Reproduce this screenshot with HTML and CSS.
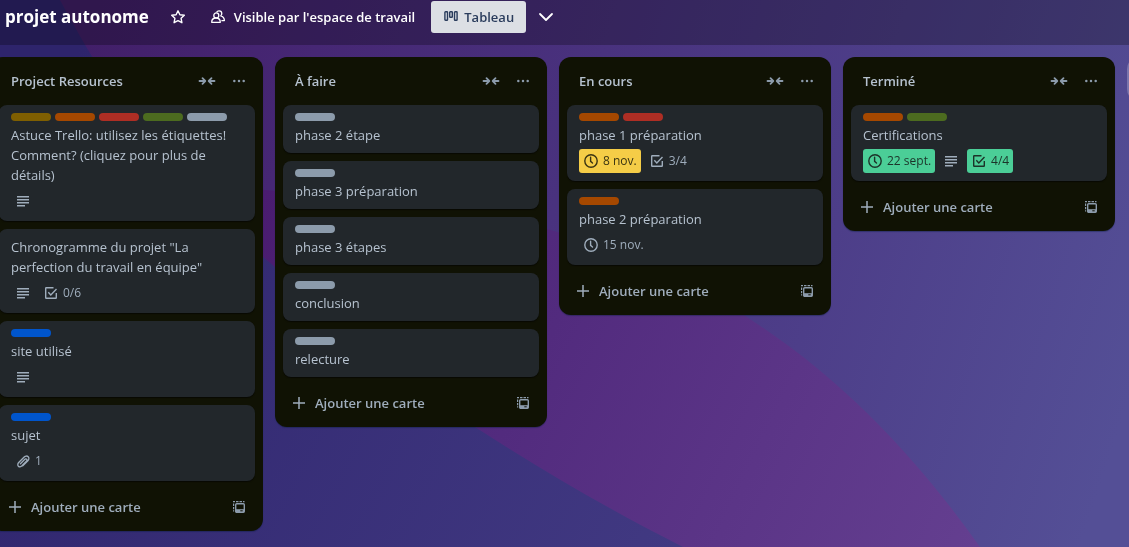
FILE: index.html
```
<!DOCTYPE html>
<html lang="fr">
<head>
<meta charset="utf-8">
<meta name="viewport" content="width=device-width, initial-scale=1">
<title>projet autonome</title>
<link rel="stylesheet" href="styles.css">
</head>
<body>
<svg class="sprite" aria-hidden="true">
  <symbol id="collapse" viewBox="0 0 18 10"><path d="M1.500 5h5.500M4.500 2.200l2.800 2.800-2.800 2.800M16.500 5h-5.500M13.500 2.200l-2.800 2.800 2.800 2.800" fill="none" stroke="currentColor" stroke-width="1.800" stroke-linecap="round" stroke-linejoin="round"/></symbol>
  <symbol id="more" viewBox="0 0 16 16"><g fill="currentColor"><circle cx="3.300" cy="8" r="1.250"/><circle cx="8" cy="8" r="1.250"/><circle cx="12.700" cy="8" r="1.250"/></g></symbol>
  <symbol id="desc" viewBox="0 0 16 16"><path d="M2 3h12v1.500H2zM2 6h12v1.500H2zM2 9h12v1.500H2zM2 12h8v1.500H2z" fill="currentColor"/></symbol>
  <symbol id="check" viewBox="0 0 16 16"><path d="M10.500 2.700H3.200a.5.500 0 0 0-.5.500v9.600c0 .3.200.5.500.5h9.600c.3 0 .5-.2.500-.5V8M5.300 7.300l2.500 2.600L13.500 4" fill="none" stroke="currentColor" stroke-width="1.400"/></symbol>
  <symbol id="clock" viewBox="0 0 16 16"><circle cx="8" cy="8" r="6.200" fill="none" stroke="currentColor" stroke-width="1.400"/><path d="M7.600 4.200v4.200l1.900 1.600" fill="none" stroke="currentColor" stroke-width="1.400" stroke-linecap="round"/></symbol>
  <symbol id="clip" viewBox="0 0 16 16"><path d="M7.800 12.800l5.100-5.100c1.200-1.200 1.300-3 .3-4s-2.800-.9-4 .3L3.700 9.500c-1.100 1.100-1.200 2.800-.3 3.700s2.300.7 3.300-.2l4.700-4.700c.7-.7.800-1.600.3-2.100s-1.400-.4-2.100.3L5.400 10.700" fill="none" stroke="currentColor" stroke-width="1.300" stroke-linecap="round"/></symbol>
  <symbol id="plus" viewBox="0 0 16 16"><path d="M8 2v12M2 8h12" stroke="currentColor" stroke-width="1.500"/></symbol>
  <symbol id="template" viewBox="0 0 16 16"><rect x="4.700" y="4.700" width="8.600" height="8.600" rx="1" fill="none" stroke="currentColor" stroke-width="1.400"/><path d="M4.700 10.200h8.600v3H4.700z" fill="currentColor"/><path d="M9.300 11.300h2.400v1H9.300z" fill="#101204"/><path d="M2 2h2v1.300H2zM5 2h2.500v1.300H5zM8.500 2H11v1.300H8.500zM12 2h1.500v1.300H12zM2 4.500h1.200V7H2zM2 8h1.200v2.300H2zM2 11.200h1.200v1.300H2z" fill="currentColor"/></symbol>
</svg>
<svg class="backdrop" viewBox="0 0 1129 547" preserveAspectRatio="none" aria-hidden="true">
  <defs>
    <linearGradient id="violet" gradientUnits="userSpaceOnUse" x1="80" y1="60" x2="1129" y2="400">
      <stop offset="0" stop-color="#421f69"/><stop offset=".2" stop-color="#462774"/><stop offset=".45" stop-color="#49327e"/><stop offset=".7" stop-color="#4d3e89"/><stop offset="1" stop-color="#544f96"/>
    </linearGradient>
    <linearGradient id="magenta" gradientUnits="userSpaceOnUse" x1="260" y1="200" x2="980" y2="547">
      <stop offset="0" stop-color="#4a1c70"/><stop offset=".4" stop-color="#522b7e"/><stop offset="1" stop-color="#643f90"/>
    </linearGradient>
    <linearGradient id="blue" gradientUnits="userSpaceOnUse" x1="0" y1="200" x2="680" y2="547">
      <stop offset="0" stop-color="#2e246c"/><stop offset="1" stop-color="#413982"/>
    </linearGradient>
  </defs>
  <rect width="1129" height="547" fill="url(#violet)"/>
  <path d="M0 170C180 185 420 195 547 229C760 287 890 420 980 547H0z" fill="url(#magenta)"/>
  <path d="M0 0H60C90 55 150 165 263 257C350 330 440 405 475 427C545 472 610 510 683 547H0z" fill="url(#blue)"/>
</svg>
<header class="topbar">
  <h1 class="board-name">projet autonome</h1>
  <button class="bar-btn square" aria-label="Ajouter aux favoris"><svg class="icon" viewBox="0 0 16 16"><path d="M8 1.800l1.900 4 4.400.5-3.200 3 .8 4.400L8 11.600l-3.900 2.100.8-4.400-3.200-3 4.400-.5z" fill="none" stroke="currentColor" stroke-width="1.400" stroke-linejoin="round"/></svg></button>
  <button class="bar-btn visibility"><svg class="icon" viewBox="0 0 16 16"><path d="M1.700 13.300c0-2.600 1.700-4.300 4.300-4.300s4.300 1.700 4.300 4.300z" fill="none" stroke="currentColor" stroke-width="1.300" stroke-linejoin="round"/><circle cx="6.300" cy="6.400" r="2.500" fill="none" stroke="currentColor" stroke-width="1.300"/><path d="M6.600 3.300c.5-1 1.300-1.500 2.400-1.500 1.600 0 2.800 1.200 2.800 2.800 0 1-.4 1.700-1.100 2.300 2.300.7 3.700 2.400 3.700 4.700h-3" fill="none" stroke="currentColor" stroke-width="1.300" stroke-linejoin="round"/></svg>Visible par l'espace de travail</button>
  <button class="bar-btn view"><svg class="icon" viewBox="0 0 16 16"><g fill="none" stroke="currentColor" stroke-width="1.400"><rect x="1.900" y="2.700" width="2.600" height="8.600" rx=".6"/><rect x="6.700" y="2.700" width="2.600" height="5.600" rx=".6"/><rect x="11.500" y="2.700" width="2.600" height="8.600" rx=".6"/></g></svg>Tableau</button>
  <button class="bar-btn square" aria-label="Autres vues"><svg class="icon" viewBox="0 0 16 16"><path d="M2 5l6 6 6-6" fill="none" stroke="currentColor" stroke-width="1.800" stroke-linecap="round" stroke-linejoin="round"/></svg></button>
</header>
<main class="board">
  <section class="list">
    <header class="list-head"><h2 class="list-name">Project Resources</h2><button class="icon-btn" aria-label="Réduire la liste"><svg class="arrows"><use href="#collapse"/></svg></button><button class="icon-btn" aria-label="Menu de la liste"><svg class="icon"><use href="#more"/></svg></button></header>
    <ul class="cards">
      <li class="card">
        <div class="labels"><span class="label yellow"></span><span class="label orange"></span><span class="label red"></span><span class="label lime"></span><span class="label gray"></span></div>
        <p class="card-name">Astuce Trello: utilisez les étiquettes! Comment? (cliquez pour plus de détails)</p>
        <div class="badges"><span class="badge"><svg class="icon"><use href="#desc"/></svg></span></div>
      </li>
      <li class="card">
        <p class="card-name">Chronogramme du projet "La perfection du travail en équipe"</p>
        <div class="badges"><span class="badge"><svg class="icon"><use href="#desc"/></svg></span><span class="badge"><svg class="icon"><use href="#check"/></svg>0/6</span></div>
      </li>
      <li class="card">
        <div class="labels"><span class="label blue"></span></div>
        <p class="card-name">site utilisé</p>
        <div class="badges"><span class="badge"><svg class="icon"><use href="#desc"/></svg></span></div>
      </li>
      <li class="card">
        <div class="labels"><span class="label blue"></span></div>
        <p class="card-name">sujet</p>
        <div class="badges"><span class="badge"><svg class="icon"><use href="#clip"/></svg>1</span></div>
      </li>
    </ul>
    <footer class="list-foot"><button class="add"><svg class="icon"><use href="#plus"/></svg>Ajouter une carte</button><button class="icon-btn" aria-label="Créer à partir d'un modèle"><svg class="icon"><use href="#template"/></svg></button></footer>
  </section>
  <section class="list">
    <header class="list-head"><h2 class="list-name">À faire</h2><button class="icon-btn" aria-label="Réduire la liste"><svg class="arrows"><use href="#collapse"/></svg></button><button class="icon-btn" aria-label="Menu de la liste"><svg class="icon"><use href="#more"/></svg></button></header>
    <ul class="cards">
      <li class="card"><div class="labels"><span class="label gray"></span></div><p class="card-name">phase 2 étape</p></li>
      <li class="card"><div class="labels"><span class="label gray"></span></div><p class="card-name">phase 3 préparation</p></li>
      <li class="card"><div class="labels"><span class="label gray"></span></div><p class="card-name">phase 3 étapes</p></li>
      <li class="card"><div class="labels"><span class="label gray"></span></div><p class="card-name">conclusion</p></li>
      <li class="card"><div class="labels"><span class="label gray"></span></div><p class="card-name">relecture</p></li>
    </ul>
    <footer class="list-foot"><button class="add"><svg class="icon"><use href="#plus"/></svg>Ajouter une carte</button><button class="icon-btn" aria-label="Créer à partir d'un modèle"><svg class="icon"><use href="#template"/></svg></button></footer>
  </section>
  <section class="list">
    <header class="list-head"><h2 class="list-name">En cours</h2><button class="icon-btn" aria-label="Réduire la liste"><svg class="arrows"><use href="#collapse"/></svg></button><button class="icon-btn" aria-label="Menu de la liste"><svg class="icon"><use href="#more"/></svg></button></header>
    <ul class="cards">
      <li class="card">
        <div class="labels"><span class="label orange"></span><span class="label red"></span></div>
        <p class="card-name">phase 1 préparation</p>
        <div class="badges"><span class="badge soon"><svg class="icon"><use href="#clock"/></svg>8 nov.</span><span class="badge"><svg class="icon"><use href="#check"/></svg>3/4</span></div>
      </li>
      <li class="card">
        <div class="labels"><span class="label orange"></span></div>
        <p class="card-name">phase 2 préparation</p>
        <div class="badges"><span class="badge"><svg class="icon"><use href="#clock"/></svg>15 nov.</span></div>
      </li>
    </ul>
    <footer class="list-foot"><button class="add"><svg class="icon"><use href="#plus"/></svg>Ajouter une carte</button><button class="icon-btn" aria-label="Créer à partir d'un modèle"><svg class="icon"><use href="#template"/></svg></button></footer>
  </section>
  <section class="list">
    <header class="list-head"><h2 class="list-name">Terminé</h2><button class="icon-btn" aria-label="Réduire la liste"><svg class="arrows"><use href="#collapse"/></svg></button><button class="icon-btn" aria-label="Menu de la liste"><svg class="icon"><use href="#more"/></svg></button></header>
    <ul class="cards">
      <li class="card">
        <div class="labels"><span class="label orange"></span><span class="label lime"></span></div>
        <p class="card-name">Certifications</p>
        <div class="badges"><span class="badge done"><svg class="icon"><use href="#clock"/></svg>22 sept.</span><span class="badge"><svg class="icon"><use href="#desc"/></svg></span><span class="badge done"><svg class="icon"><use href="#check"/></svg>4/4</span></div>
      </li>
    </ul>
    <footer class="list-foot"><button class="add"><svg class="icon"><use href="#plus"/></svg>Ajouter une carte</button><button class="icon-btn" aria-label="Créer à partir d'un modèle"><svg class="icon"><use href="#template"/></svg></button></footer>
  </section>
  <button class="add-list" aria-label="Ajouter une autre liste"></button>
</main>
</body>
</html>
```
FILE: styles.css
```
* { box-sizing: border-box; }

body {
  margin: 0;
  min-height: 100vh;
  display: flex;
  flex-direction: column;
  overflow: hidden;
  background: #2e246c;
  color: #b6c2cf;
  font: 13px/20px "Segoe UI", "Open Sans", "Noto Sans", sans-serif;
}

h1, h2, p, ul { margin: 0; padding: 0; }

button {
  padding: 0;
  border: 0;
  background: none;
  color: inherit;
  font: inherit;
  cursor: pointer;
}

.sprite { display: none; }

.backdrop {
  position: fixed;
  inset: 0;
  z-index: -1;
  width: 100%;
  height: 100%;
}

.icon { display: block; flex: none; width: 16px; height: 16px; }
.arrows { display: block; width: 18px; height: 10px; }

/* Board header */
.topbar {
  display: flex;
  align-items: center;
  padding: 1px 5px 12px;
  background: rgba(0, 0, 0, .26);
  color: #fff;
}

.board-name { font-size: 17px; line-height: 32px; font-weight: 700; margin-right: 13px; white-space: nowrap; }

.bar-btn {
  display: flex;
  align-items: center;
  justify-content: center;
  height: 32px;
  border-radius: 3px;
  font-weight: 600;
  white-space: nowrap;
}

.square { width: 32px; }
.visibility { gap: 8px; padding: 0 16px; }
.view { gap: 5px; padding: 0 12px; margin-right: 4px; background: #dcdfe4; color: #2a3c5c; }

/* Lists */
.board {
  display: flex;
  align-items: flex-start;
  gap: 12px;
  margin-left: -9px;
  padding: 12px 0;
}

.list {
  flex: none;
  width: 272px;
  border-radius: 12px;
  background: #101204;
  box-shadow: 0 1px 1px rgba(9, 30, 66, .4);
}

.list-head { display: flex; align-items: center; padding: 8px; }
.list-name { flex: 1; padding-left: 12px; font-size: 13px; line-height: 20px; font-weight: 600; }

.icon-btn {
  display: flex;
  align-items: center;
  justify-content: center;
  width: 32px;
  height: 32px;
  color: #8c9bab;
}

.cards {
  display: flex;
  flex-direction: column;
  gap: 8px;
  padding: 0 8px;
  list-style: none;
}

.card {
  display: flex;
  flex-direction: column;
  gap: 4px;
  padding: 8px 12px;
  border-radius: 8px;
  background: #22272b;
  box-shadow: 0 1px 1px rgba(3, 4, 4, .6);
}

.labels { display: flex; gap: 4px; }
.label { width: 40px; height: 8px; border-radius: 4px; }
.yellow { background: #7f5f01; }
.orange { background: #a54800; }
.red { background: #ae2e24; }
.lime { background: #4c6b1f; }
.gray { background: #8c9bab; }
.blue { background: #0055cc; }

.badges { display: flex; gap: 4px; font-size: 12px; color: #9fadbc; }

.badge {
  display: flex;
  align-items: center;
  gap: 4px;
  height: 24px;
  padding: 0 4px;
  border-radius: 3px;
}

.soon { background: #f5cd47; color: #3a3412; }
.done { background: #4bce97; color: #1c3329; }

.list-foot { display: flex; align-items: center; padding: 10px 8px 8px; }

.add {
  flex: 1;
  display: flex;
  align-items: center;
  gap: 8px;
  height: 32px;
  padding-left: 8px;
  color: #9fadbc;
  font-weight: 600;
}

.add-list {
  flex: none;
  width: 272px;
  height: 44px;
  border-radius: 12px;
  background: rgba(255, 255, 255, .24);
}
```
